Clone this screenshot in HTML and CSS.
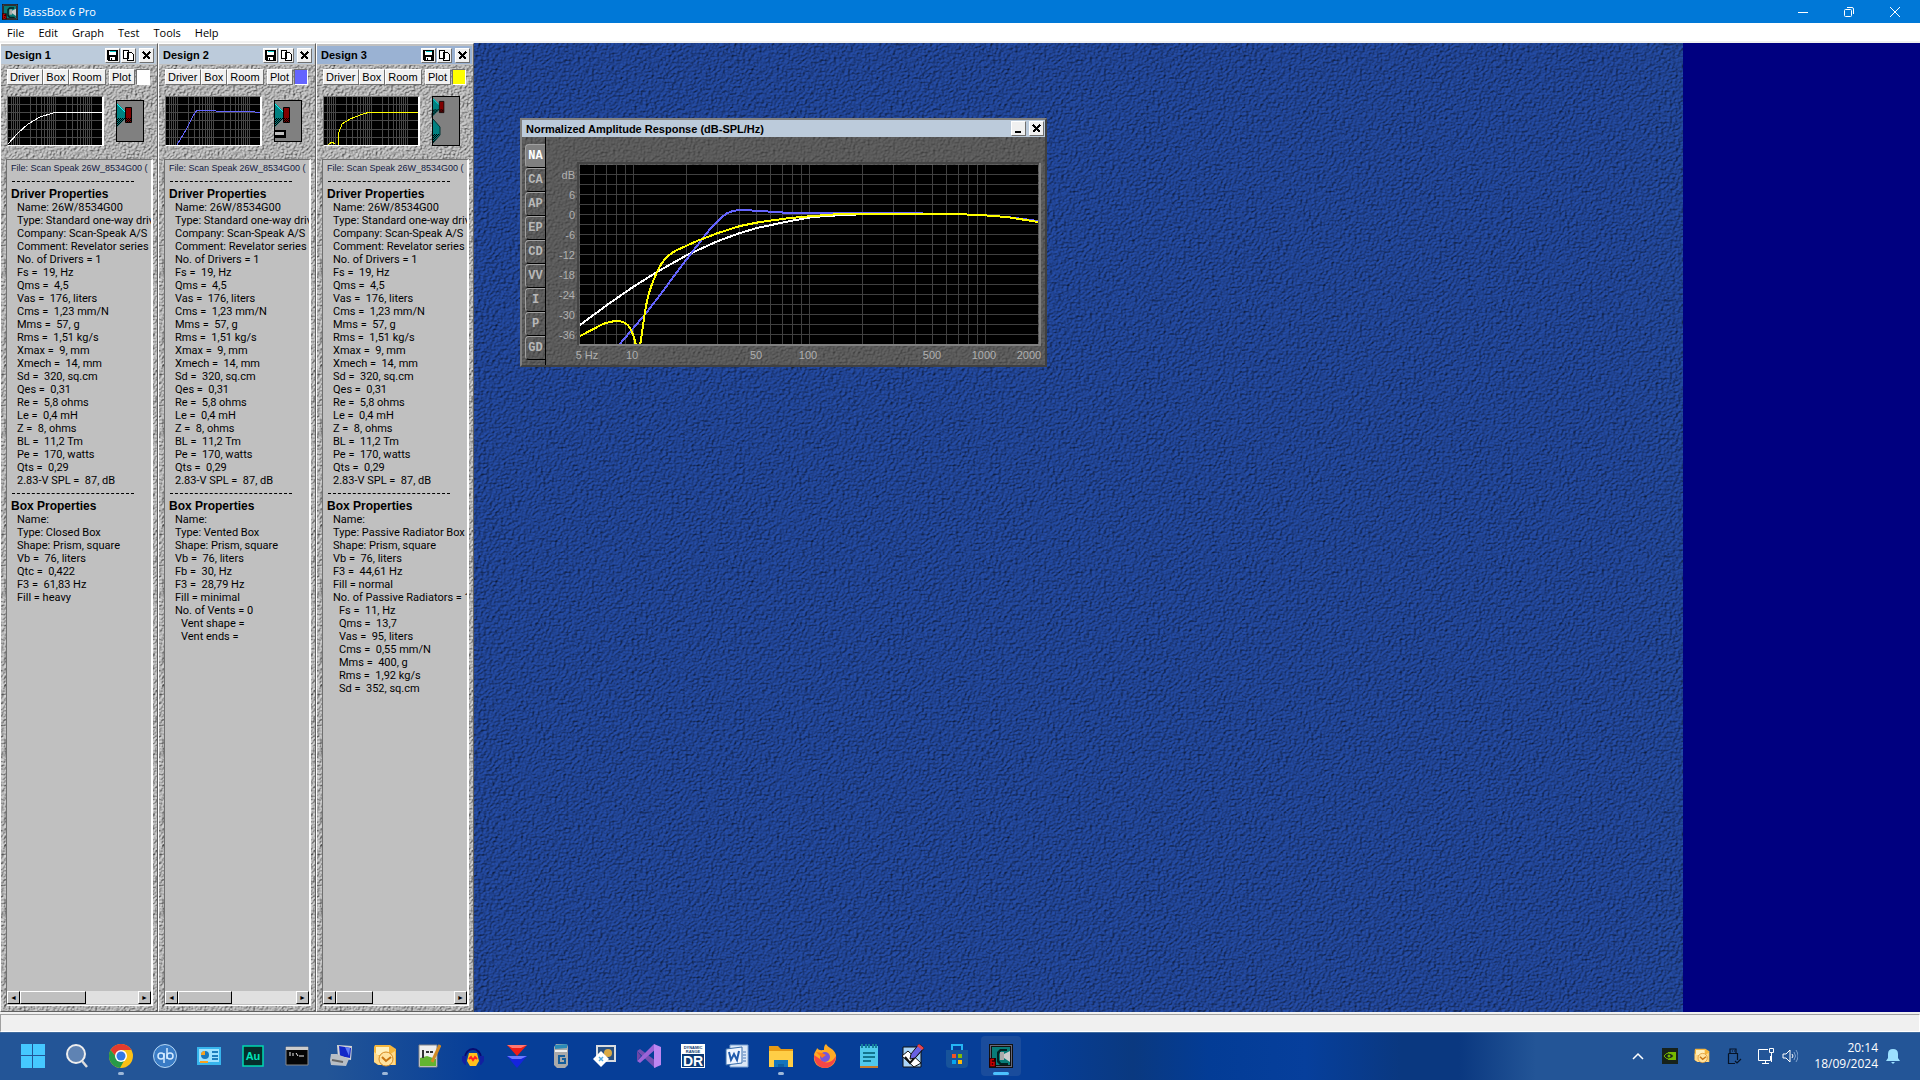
FILE: index.html
```html
<!DOCTYPE html>
<html lang="en">
<head>
    <meta charset="UTF-8">
    <meta name="viewport" content="width=device-width, initial-scale=1.0">
    <title>BassBox 6 Pro</title>
    <link rel="stylesheet" href="styles.css">
</head>
<body>
    <!-- shared icons -->
    <svg class="defs" width="0" height="0">
        <defs>
            <pattern id="dots" width="2" height="2" patternUnits="userSpaceOnUse">
                <path d="M0 0h1v1H0zM1 1h1v1H1z" fill="#000" shape-rendering="crispEdges"/>
            </pattern>
            <symbol id="i-save" viewBox="0 0 11 11">
                <path d="M0 0h11v11H1l-1-1z" fill="#000"/>
                <path d="M2 1h7v4H2z" fill="#fff"/><path d="M3 1h6v1H3z" fill="#0cc"/>
                <path d="M3 7h5v3H3z" fill="#fff"/><path d="M4 8h1v2H4z" fill="#000"/>
            </symbol>
            <symbol id="i-copy" viewBox="0 0 11 11">
                <path d="M.5 .5h5v8h-5zM4.500 2.500h4l2 2v6h-6z" fill="#fff" stroke="#000"/>
            </symbol>
            <symbol id="i-close" viewBox="0 0 11 11">
                <path d="M2 2l7 7M9 2l-7 7" stroke="#000" stroke-width="2"/>
            </symbol>
            <symbol id="i-grid" viewBox="0 0 94 48">
                <path d="M3.500 0v48M5.500 0v48M7.500 0v48M9.500 0v48M11.500 0v48M22.500 0v48M28.500 0v48M33.500 0v48M36.500 0v48M39.500 0v48M41.500 0v48M43.500 0v48M45.500 0v48M47.500 0v48M58.500 0v48M64.500 0v48M69.500 0v48M72.500 0v48M75.500 0v48M77.500 0v48M79.500 0v48M81.500 0v48M83.500 0v48M0 7.500h94M0 15.500h94M0 23.500h94M0 32.500h94M0 40.500h94" stroke="#484848"/>
            </symbol>
            <symbol id="i-woofer" viewBox="0 0 16 24">
                <path d="M0 0l8 8v8l-8 8z" fill="#008080"/>
                <path d="M0 15h9l-9 9z" fill="url(#dots)"/>
                <path d="M0 1l8 8" stroke="#0ff"/>
                <path d="M8.500 4.500h6v15h-6z" fill="#800000" stroke="#000"/>
                <path d="M9 15h5v4H9z" fill="url(#dots)"/>
            </symbol>
            <symbol id="i-app" viewBox="0 0 24 24">
                <path d="M0 0h24v24H0z" fill="#111"/><path d="M1 1h22v22H1z" fill="#667"/>
                <path d="M2 2h20v20H2z" fill="#111"/>
                <path d="M3 3h18v18H3z" fill="#087c78"/>
                <path d="M8 8l3-3h7v2h-6l-2 3v6l2 3h7v2h-8l-3-3z" fill="#022"/>
                <path d="M11 8h4v8h-4z" fill="#aaa"/><path d="M15 10l6-3v11l-6-4z" fill="#ccc"/>
                <path d="M0 14h7v9H0z" fill="#200"/>
                <path d="M5 15.500H2v6h3v-3H2" stroke="#c00" fill="none" stroke-width="1.500"/>
            </symbol>
            <symbol id="i-mail" viewBox="0 0 24 24">
                <path d="M2 1h15l6 4v16H5l-4-3V3z" fill="#f5b63e"/>
                <path d="M3 3h13v8H3z" fill="#fff0bd"/>
                <path d="M1 8l9 7 12-8v14H6l-5-3z" fill="#ffd98a"/>
                <circle cx="13" cy="15" r="7" fill="#ffe3a0" stroke="#d68a20"/>
                <path d="M9 13l4 4 5-4" stroke="#c87512" stroke-width="2" fill="none"/>
            </symbol>
        </defs>
    </svg>

    <header class="titlebar">
        <svg class="app-icon"><use href="#i-app"/></svg>
        <h1>BassBox 6 Pro</h1>
        <div class="window-controls">
            <button aria-label="Minimize"><svg width="12" height="12"><path d="M1 6.500h10" stroke="#fff"/></svg></button>
            <button aria-label="Restore"><svg width="12" height="12" fill="none" stroke="#fff"><rect x="1.500" y="3.500" width="7" height="7" rx="1"/><path d="M4 1.500h5q1.500 0 1.500 1.500v5"/></svg></button>
            <button aria-label="Close"><svg width="12" height="12"><path d="M1 1l10 10M11 1L1 11" stroke="#fff"/></svg></button>
        </div>
    </header>

    <nav class="menubar">
        <button>File</button>
        <button>Edit</button>
        <button>Graph</button>
        <button>Test</button>
        <button>Tools</button>
        <button>Help</button>
    </nav>

    <main class="workspace">
        <div class="designs" id="designs"></div>

        <div class="desktop">
            <section class="graph">
                <div class="graph-title">
                    <h2>Normalized Amplitude Response (dB-SPL/Hz)</h2>
                    <button class="tool" aria-label="Minimize"><svg viewBox="0 0 11 11"><path d="M2 8h6v2H2z"/></svg></button>
                    <button class="tool close" aria-label="Close"><svg><use href="#i-close"/></svg></button>
                </div>
                <div class="graph-body">
                    <div class="tabs">
                        <button class="on">NA</button>
                        <button>CA</button>
                        <button>AP</button>
                        <button>EP</button>
                        <button>CD</button>
                        <button>VV</button>
                        <button>I</button>
                        <button>P</button>
                        <button>GD</button>
                    </div>
                    <svg class="chart" viewBox="0 0 499 228">
                        <path d="M32 208V26h461" fill="none" stroke="#444" stroke-width="2"/>
                        <path d="M33 208h461V26" fill="none" stroke="#808080" stroke-width="2"/>
                        <!-- plot area, 176px per decade and 10px per 3dB -->
                        <svg x="34" y="28" width="458" height="179">
                            <path d="M0 0h458v179H0z"/>
                            <path class="lines" d="M14.500 0v179M26.500 0v179M36.500 0v179M45.500 0v179M53.500 0v179M106.500 0v179M137.500 0v179M159.500 0v179M176.500 0v179M190.500 0v179M202.500 0v179M212.500 0v179M221.500 0v179M229.500 0v179M282.500 0v179M313.500 0v179M335.500 0v179M352.500 0v179M366.500 0v179M378.500 0v179M388.500 0v179M397.500 0v179M405.500 0v179M0 9.500h458M0 19.500h458M0 29.500h458M0 39.500h458M0 49.500h458M0 59.500h458M0 69.500h458M0 79.500h458M0 89.500h458M0 99.500h458M0 109.500h458M0 119.500h458M0 129.500h458M0 139.500h458M0 149.500h458M0 159.500h458M0 169.500h458"/>
                            <g class="curves">
                                <path stroke="#fff" d="M0 160L27 140 53 122 77 107 107 90 138 76 160 68 177 63 210 56 233 52 263 50 290 49H373L400 50 427 52 458 57"/>
                                <path stroke="#6464ff" d="M39 180L67 147 80 130 103 99 120 77 130 64C143 51 146 45 163 45L180 46 210 48H313L373 49 400 50 427 52 458 56"/>
                                <path stroke="#ff0" d="M0 171L23 159C33 155 45 154 50 163Q54 170 56 181H60L65 147Q68 126 77 107C83 93 91 88 97 85L117 76 138 68 160 61 180 57 210 53 233 51 260 49H373L400 50 427 52 458 57"/>
                            </g>
                        </svg>
                        <g class="labels" text-anchor="end">
                            <text x="29" y="42">dB</text>
                            <text x="29" y="62">6</text>
                            <text x="29" y="82">0</text>
                            <text x="29" y="102">-6</text>
                            <text x="29" y="122">-12</text>
                            <text x="29" y="142">-18</text>
                            <text x="29" y="162">-24</text>
                            <text x="29" y="182">-30</text>
                            <text x="29" y="202">-36</text>
                        </g>
                        <g class="labels" text-anchor="middle">
                            <text x="41" y="222">5 Hz</text>
                            <text x="86" y="222">10</text>
                            <text x="210" y="222">50</text>
                            <text x="262" y="222">100</text>
                            <text x="386" y="222">500</text>
                            <text x="438" y="222">1000</text>
                            <text x="483" y="222">2000</text>
                        </g>
                    </svg>
                </div>
            </section>
        </div>
        <div class="margin"></div>
    </main>

    <div class="statusbar"></div>

    <footer class="taskbar">
        <div class="apps">
            <button aria-label="Start"><svg viewBox="0 0 24 24"><path d="M0 0h11v11H0zM12 0h12v11H12zM0 12h11v12H0zM12 12h12v12H12z" fill="#45c8ff"/></svg></button>
            <button aria-label="Search"><svg viewBox="0 0 24 24"><circle cx="11" cy="10" r="9" fill="#5f83b3" stroke="#eee" stroke-width="2"/><path d="M17 17l5 6" stroke="#ddd" stroke-width="2.500"/></svg></button>
            <button aria-label="Chrome" class="open"><svg viewBox="0 0 24 24"><circle cx="12" cy="12" r="12" fill="#fbc116"/><path d="M1.600 6a12 12 0 0 1 20.800 0H12L8 14z" fill="#e33b2e"/><path d="M1.600 6a12 12 0 0 0 9.400 18l5-9-8-1z" fill="#289a48"/><circle cx="12" cy="12" r="6" fill="#fff"/><circle cx="12" cy="12" r="4.500" fill="#3478e5"/></svg></button>
            <button aria-label="qBittorrent"><svg viewBox="0 0 24 24"><circle cx="12" cy="12" r="11.500" fill="#397bc5" stroke="#b6d7f4"/><g fill="none" stroke="#d4eaff" stroke-width="1.500"><circle cx="8" cy="12" r="3"/><path d="M11 9v10M14 4v11"/><circle cx="17" cy="12" r="3"/></g></svg></button>
            <button aria-label="Control Panel"><svg viewBox="0 0 24 24"><path d="M0 3h24v18H0z" fill="#37b5ed"/><path d="M2 5h20v13H2z" fill="#9de2ff"/><circle cx="8" cy="11" r="4" fill="#1878be"/><path d="M8 11V7a4 4 0 0 0-4 4z" fill="#f9a11d"/><path d="M15 8h6M15 12h6M15 15h6" stroke="#1c7ebd" stroke-width="2"/><path d="M3 17h8v2H3z" fill="#f9a11d"/></svg></button>
            <button aria-label="Audition"><svg viewBox="0 0 24 24"><path d="M2 2h20v20H2z" fill="#062e2b" stroke="#00d9b0" stroke-width="1.500"/><text x="12" y="16" class="au">Au</text></svg></button>
            <button aria-label="Command Prompt"><svg viewBox="0 0 24 24"><path d="M1 3h22v18H1z" fill="#050505" stroke="#888"/><path d="M1 3h22v3H1z" fill="#ccc"/><path d="M4 9h2M4 11h2M8 9v3M11 9l2 3M14 12h5" stroke="#eee"/></svg></button>
            <button aria-label="Remote session"><svg viewBox="0 0 24 24"><path d="M8 1l15 1-1 14-13-2z" fill="#d5d5d5"/><path d="M10 2l12 2-1 10-10-2z" fill="#1227c8"/><path d="M16 3l5 1-1 8z" fill="#5f7bf5"/><path d="M2 10l6 0 12 5-3 7-15-1-1-5z" fill="#b8bec5"/><path d="M3 16l11 2" stroke="#666" stroke-width="2"/></svg></button>
            <button aria-label="Outlook" class="open"><svg viewBox="0 0 24 24"><use href="#i-mail"/></svg></button>
            <button aria-label="Notepad++"><svg viewBox="0 0 24 24"><path d="M2 1h18v22H2z" fill="#eee" stroke="#888"/><path d="M3 14l7-2 9 3v7H3z" fill="#63b431"/><path d="M6 6v8M9 8h3M13 8h3" stroke="#333" stroke-width="2"/><path d="M23 1l-8 17" stroke="#d18a24" stroke-width="3"/></svg></button>
            <button aria-label="Audacity"><svg viewBox="0 0 24 24"><path d="M4 14a8 9 0 1 1 16 0" fill="none" stroke="#090b70" stroke-width="2"/><path d="M8 9h8l2 8-3 5H9l-3-5z" fill="#ffc21c"/><path d="M8 15l2-2 2 3 2-3 2 2" stroke="#f22" stroke-width="2" fill="none"/><path d="M1 12h4v9H4l-3-4zM19 12h4v5l-3 4h-1z" fill="#1220a0"/></svg></button>
            <button aria-label="Sync"><svg viewBox="0 0 24 24"><path d="M2 1h20L12 12z" fill="#ed1c16"/><path d="M2 12h20L12 24z" fill="#1524dd"/><path d="M2 1h20l-6 3H7z" fill="#ff7770"/><path d="M2 12h20l-6 3H7z" fill="#6b7aff"/></svg></button>
            <button aria-label="Battery"><svg viewBox="0 0 24 24"><path d="M5 3l2-3h11l1 3v18l-3 3H8l-3-3z" fill="#aaa"/><path d="M6 1l12-1v4l-12 1z" fill="#2a8ab8"/><path d="M6 7h12" stroke="#eee" stroke-width="2"/><path d="M16 12h-6v7h6v-4h-3" fill="none" stroke="#155e9c" stroke-width="2"/></svg></button>
            <button aria-label="Display tool"><svg viewBox="0 0 24 24"><path d="M3 1h20v17H3z" fill="#d9dce0"/><path d="M5 3h16v13H5z" fill="#285082"/><circle cx="15" cy="9" r="4" fill="#d9a945"/><path d="M8 7l8 8-8 8-8-8z" fill="#fff"/><path d="M6 13l4 4M10 13l-4 4" stroke="#51a8df" stroke-width="1.500"/></svg></button>
            <button aria-label="Visual Studio"><svg viewBox="0 0 24 24"><path d="M0 7l3-2 20 15-5 4z" fill="#7650b4"/><path d="M0 17l3 2L20 4l-3-4z" fill="#9b63d7"/><path d="M17 0l7 3v18l-7 3z" fill="#bd86f1"/><path d="M0 7v10l4-5z" fill="#7045a7"/></svg></button>
            <button aria-label="Dynamic Range"><svg viewBox="0 0 24 24"><path d="M0 0h24v24H0z" fill="#fff"/><path d="M1 10h22v13H1z" fill="#0b3974"/><text x="12" y="5" class="dr-small">DYNAMIC</text><text x="12" y="9" class="dr-small">RANGE</text><text x="12" y="22" class="dr">DR</text></svg></button>
            <button aria-label="Word"><svg viewBox="0 0 24 24"><path d="M5 1h18v22H5z" fill="#dce8f7" stroke="#7aa1d1"/><path d="M1 5l16-2v16l-16 2z" fill="#eff5ff" stroke="#376dab"/><path d="M4 8l2 8 3-6 3 6 2-9" fill="none" stroke="#215bac" stroke-width="2"/><path d="M18 8h3M18 11h3M18 14h3M18 17h3" stroke="#4c7dbb"/></svg></button>
            <button aria-label="File Explorer" class="open"><svg viewBox="0 0 24 24"><path d="M0 2h9l3 3h12v18H0z" fill="#e79b16"/><path d="M0 7h24v16H0z" fill="#ffce46"/><path d="M5 16h14v7H5z" fill="#1474bd"/><path d="M9 20h6v3H9z" fill="#1060a0"/></svg></button>
            <button aria-label="Firefox"><svg viewBox="0 0 24 24"><path d="M13 0c2 4 8 4 10 11 1 7-4 13-11 13S0 19 1 12c0-4 3-6 3-8 2 3 5 2 7 2 0-3 0-4 2-6z" fill="#ffab25"/><path d="M1 11c0 8 5 13 11 13s11-6 11-12c-5 8-11 8-16 3z" fill="#f64646"/><circle cx="12" cy="13" r="5" fill="#7656dc"/><path d="M3 8l6 1 4 2-4 3z" fill="#ff791c"/></svg></button>
            <button aria-label="Notepad"><svg viewBox="0 0 24 24"><path d="M3 2h18v20H3z" fill="#50c9ec"/><path d="M5 0v4M9 0v4M12 0v4M16 0v4M19 0v4" stroke="#16819b" stroke-width="2"/><path d="M6 9h12M6 13h12M6 17h8" stroke="#13758e" stroke-width="2"/><path d="M3 22h18v2H3z" fill="#c77b28"/></svg></button>
            <button aria-label="Sketch tool"><svg viewBox="0 0 24 24"><path d="M2 3h18v20H2z" fill="#a9d4f9" stroke="#111"/><path d="M1 12l6-5 13 12-7 4z" fill="#fff" stroke="#111"/><path d="M4 13l5 6L22 4" fill="none" stroke="#111" stroke-width="2"/><path d="M18 0l5 4-9 10-5 1 1-5z" fill="#6861e2" stroke="#111"/><path d="M18 0l5 4-2 2-5-4z" fill="#e5434c"/></svg></button>
            <button aria-label="Store"><svg viewBox="0 0 24 24"><path d="M7 7V1h10v6" fill="none" stroke="#25b5f4" stroke-width="2"/><path d="M1 6h22v14q0 4-4 4H5q-4 0-4-4z" fill="#17539a"/><path d="M7 10h4v4H7z" fill="#f35325"/><path d="M13 10h4v4h-4z" fill="#81bc06"/><path d="M7 16h4v4H7z" fill="#05a6f0"/><path d="M13 16h4v4h-4z" fill="#ffba08"/></svg></button>
            <button aria-label="BassBox 6 Pro" class="active"><svg viewBox="0 0 24 24"><use href="#i-app"/></svg></button>
        </div>
        <div class="tray">
            <button aria-label="Show hidden icons"><svg viewBox="0 0 16 16"><path d="M3 11l5-5 5 5" fill="none" stroke="#fff" stroke-width="1.500"/></svg></button>
            <button aria-label="Nvidia"><svg viewBox="0 0 16 16"><path d="M0 0h16v16H0z" fill="#17221a"/><path d="M6 4h8v8H6z" fill="#76b900"/><path d="M2 8q4-6 10 0-6 6-10 0z" fill="#17221a" stroke="#76b900"/><circle cx="7" cy="8" r="1.500" fill="#76b900"/></svg></button>
            <button aria-label="Outlook"><svg viewBox="0 0 24 24"><use href="#i-mail"/></svg></button>
            <button aria-label="Eject USB"><svg viewBox="0 0 16 16"><path d="M4 5V1h6v4M2.500 5.500h9V12M2.500 5.500v10H9M9 13l2 2 4-4M6 3h1M8 3h1" fill="none" stroke="#061326" stroke-width="1.200"/></svg></button>
            <div class="system">
                <svg viewBox="0 0 16 16"><path d="M10 1.500H.5v11h12V8M4 15.500h7M7.500 13v2M11.500 .5h4v4h-4zM13.500 5v9" fill="none" stroke="#fff"/></svg>
                <svg viewBox="0 0 16 16"><path d="M1 6h3l4-4v12l-4-4H1zM10 6q2 2 0 4" fill="none" stroke="#fff"/><path d="M12 4q3 4 0 8M14 2q4 6 0 12" fill="none" stroke="#7fa2cf"/></svg>
            </div>
            <div class="clock"><span>20:14</span><span>18/09/2024</span></div>
            <button aria-label="Notifications"><svg viewBox="0 0 16 16"><path d="M8 1q5 0 5 5v4l2 3H1l2-3V6q0-5 5-5zM6 14h4l-2 2z" fill="#9ce0ff"/></svg></button>
        </div>
    </footer>

    <script src="script.js"></script>
</body>
</html>
```
FILE: script.js
```javascript
const driver = [
    'Name: 26W/8534G00', 'Type: Standard one-way driv', 'Company: Scan-Speak A/S',
    'Comment: Revelator series', 'No. of Drivers = 1', 'Fs =  19, Hz', 'Qms =  4,5',
    'Vas =  176, liters', 'Cms =  1,23 mm/N', 'Mms =  57, g', 'Rms =  1,51 kg/s',
    'Xmax =  9, mm', 'Xmech =  14, mm', 'Sd =  320, sq.cm', 'Qes =  0,31',
    'Re =  5,8 ohms', 'Le =  0,4 mH', 'Z =  8, ohms', 'BL =  11,2 Tm',
    'Pe =  170, watts', 'Qts =  0,29', '2.83-V SPL =  87, dB'
];

const woofer = '<use href="#i-woofer" x="1" y="3" width="16" height="24"/>';

const designs = [
    {
        name: 'Design 1',
        color: '#fff',
        curve: 'M0 47L9 37 20 27 32 20 45 16 52 15H87L94 16',
        height: 42,
        icon: woofer,
        scroll: 56,
        box: ['Name:', 'Type: Closed Box', 'Shape: Prism, square', 'Vb =  76, liters',
            'Qtc =  0,422', 'F3 =  61,83 Hz', 'Fill = heavy'],
        extra: []
    },
    {
        name: 'Design 2',
        color: '#6464ff',
        curve: 'M11 48L21 31 27 19 31 13H49L51 14.500H87L94 16',
        height: 42,
        icon: woofer + '<path d="M1 30h11v8H1z" fill="#000"/><path d="M1 32h9v3H1z" fill="#c0c0c0"/>',
        scroll: 46,
        box: ['Name:', 'Type: Vented Box', 'Shape: Prism, square', 'Vb =  76, liters',
            'Fb =  30, Hz', 'F3 =  28,79 Hz', 'Fill = minimal', 'No. of Vents = 0'],
        extra: ['Vent shape =', 'Vent ends =']
    },
    {
        name: 'Design 3',
        color: '#ff0',
        current: true,
        curve: 'M4 48L8 45 11 47M14 48L15 35 18 27 26 22 39 17 46 15H87L94 16',
        height: 50,
        icon: `<use href="#i-woofer" x="1" y="2" width="12" height="18"/>
            <path d="M1 23l7 8v8l-7 8z" fill="#008080"/><path d="M1 38h7l-7 9z" fill="url(#dots)"/>
            <path d="M1 23l7 8v8l-7 8" fill="none" stroke="#033"/>`,
        scroll: 31,
        box: ['Name:', 'Type: Passive Radiator Box', 'Shape: Prism, square', 'Vb =  76, liters',
            'F3 =  44,61 Hz', 'Fill = normal', 'No. of Passive Radiators = 1'],
        extra: ['Fs =  11, Hz', 'Qms =  13,7', 'Vas =  95, liters', 'Cms =  0,55 mm/N',
            'Mms =  400, g', 'Rms =  1,92 kg/s', 'Sd =  352, sq.cm']
    }
];

function items(list, cls = '') {
    return list.map(text => `<li class="${cls}">${text}</li>`).join('');
}

function renderDesign(d) {
    const section = document.createElement('section');
    section.className = d.current ? 'design current' : 'design';
    section.innerHTML = `
        <div class="design-title">
            <h2>${d.name}</h2>
            <button class="tool" aria-label="Save"><svg><use href="#i-save"/></svg></button>
            <button class="tool" aria-label="Copy"><svg><use href="#i-copy"/></svg></button>
            <button class="tool close" aria-label="Close"><svg><use href="#i-close"/></svg></button>
        </div>
        <div class="design-tools">
            <button>Driver</button>
            <button>Box</button>
            <button>Room</button>
            <button class="plot">Plot</button>
            <button class="swatch" aria-label="Plot color" style="background: ${d.color}"></button>
        </div>
        <div class="preview">
            <svg class="thumb" viewBox="0 0 94 48">
                <use href="#i-grid"/>
                <path d="${d.curve}" fill="none" stroke="${d.color}"/>
            </svg>
            <svg width="28" height="${d.height}">
                <rect x=".5" y=".5" width="27" height="${d.height - 1}" fill="#808080" stroke="#000"/>
                ${d.icon}
            </svg>
        </div>
        <div class="listing">
            <p class="file">File: Scan Speak 26W_8534G00 (</p>
            <hr>
            <h3>Driver Properties</h3>
            <ul>${items(driver)}</ul>
            <hr>
            <h3>Box Properties</h3>
            <ul>${items(d.box)}${items(d.extra, 'sub')}</ul>
            <div class="scroll">
                <button aria-label="Scroll left">&#9668;</button>
                <div class="track"><div class="handle" style="width: ${d.scroll}%"></div></div>
                <button aria-label="Scroll right">&#9658;</button>
            </div>
        </div>`;
    document.getElementById('designs').appendChild(section);
}

designs.forEach(renderDesign);
```
FILE: styles.css
```css
* {
    margin: 0;
    padding: 0;
    box-sizing: border-box;
}

body {
    display: flex;
    flex-direction: column;
    height: 100vh;
    overflow: hidden;
    font-family: "Liberation Sans", Arial, sans-serif;
    font-size: 11px;
    color: #000;
    background: #f0f0f0;
}

button {
    font: inherit;
    color: inherit;
    border: none;
    background: none;
}

svg {
    display: block;
    flex: none;
}

.defs {
    position: absolute;
}

/* main window */
.titlebar {
    display: flex;
    align-items: center;
    height: 23px;
    padding: 0 2px;
    background: #0078d7;
    color: #fff;
    font-family: "Open Sans", sans-serif;
}

.titlebar h1 {
    flex: 1;
    margin-left: 5px;
    font-size: 11px;
    font-weight: normal;
}

.app-icon {
    width: 16px;
    height: 16px;
}

.window-controls {
    display: flex;
}

.window-controls button {
    display: flex;
    justify-content: center;
    align-items: center;
    width: 46px;
    height: 20px;
}

.menubar {
    display: flex;
    align-items: center;
    gap: 14px;
    height: 20px;
    padding-left: 7px;
    background: #fff;
    border-bottom: 2px solid #f0f0f0;
    font-family: "Open Sans", sans-serif;
}

.workspace {
    flex: 1;
    display: flex;
    min-height: 0;
}

/* design panels */
.designs {
    display: flex;
}

.design {
    display: flex;
    flex-direction: column;
    width: 158px;
    padding-bottom: 5px;
    border: 1px solid #fff;
    border-right-color: #606060;
    border-bottom-color: #606060;
    background: #b0b0b0 url("data:image/svg+xml,%3Csvg xmlns='http://www.w3.org/2000/svg' width='160' height='160'%3E%3Cfilter id='n' x='0' y='0' width='100%25' height='100%25' color-interpolation-filters='sRGB'%3E%3CfeTurbulence type='fractalNoise' baseFrequency='.45 .55' numOctaves='2' stitchTiles='stitch'/%3E%3CfeDiffuseLighting surfaceScale='1.8' lighting-color='%23d4d4d4'%3E%3CfeDistantLight azimuth='225' elevation='58'/%3E%3C/feDiffuseLighting%3E%3C/filter%3E%3Crect width='160' height='160' filter='url(%23n)'/%3E%3C/svg%3E");
}

.design-title,
.graph-title {
    display: flex;
    align-items: center;
    background: #bccbdb;
}

.design-title {
    height: 21px;
    padding: 0 2px 0 4px;
    border: 1px solid #c0c0c0;
    border-top-width: 2px;
    border-left: none;
}

.graph-title {
    height: 17px;
    padding: 0 1px 0 4px;
}

.current .design-title {
    background: #9ab2d3;
}

.design-title h2,
.graph-title h2 {
    flex: 1;
    font-size: 11px;
    line-height: 16px;
    white-space: nowrap;
}

.tool {
    width: 15px;
    height: 15px;
    margin-left: 1px;
    padding: 1px;
    background: #f0f0f0;
    border: 1px solid #fff;
    border-right-color: #707070;
    border-bottom-color: #707070;
}

.tool svg {
    width: 11px;
    height: 11px;
    shape-rendering: crispEdges;
}

.tool.close {
    margin-left: 3px;
}

.design-tools {
    display: flex;
    margin-top: 4px;
    padding: 0 7px 0 6px;
}

.design-tools button {
    height: 16px;
    padding: 0 3px 0 2px;
    background: #f0f0f0;
    border: 1px solid #fff;
    border-right-color: #707070;
    border-bottom-color: #707070;
    line-height: 13px;
}

.design-tools .plot {
    margin-left: auto;
    margin-right: 1px;
}

.design-tools .swatch {
    width: 14px;
    border-color: #707070 #fff #fff #707070;
}

.preview {
    display: flex;
    justify-content: space-between;
    align-items: center;
    height: 50px;
    margin: 11px 13px 13px 6px;
}

.thumb {
    width: 97px;
    height: 50px;
    background: #000;
    border: 1px solid #707070;
    border-right: 2px solid #fff;
    border-bottom-color: #fff;
    shape-rendering: crispEdges;
}

.listing {
    flex: 1;
    display: flex;
    flex-direction: column;
    margin: 0 4px 0 5px;
    padding: 2px 0 1px;
    overflow: hidden;
    background: #c0c0c0;
    border: 1px solid #707070;
    border-right: 2px solid #fff;
    border-bottom-color: #fff;
    line-height: 13px;
}

.listing .file {
    padding-left: 4px;
    font-size: 9px;
    color: #101840;
    white-space: nowrap;
}

.listing hr {
    width: 122px;
    margin: 6px 0 6px 5px;
    border: none;
    border-top: 1px dashed #000;
}

.listing h3 {
    padding-left: 4px;
    font-size: 12px;
}

.listing ul {
    padding-left: 10px;
    list-style: none;
}

.listing li {
    font-family: Roboto, "Liberation Sans", sans-serif;
    white-space: pre;
}

.listing .sub {
    padding-left: 6px;
}

.scroll {
    display: flex;
    height: 13px;
    margin-top: auto;
}

.scroll button,
.handle {
    background: #c0c0c0;
    border: 1px solid #fff;
    border-right-color: #000;
    border-bottom-color: #000;
}

.scroll button {
    width: 13px;
    font-size: 7px;
    line-height: 10px;
}

.track {
    flex: 1;
    background: #e0e0e0;
}

.handle {
    height: 13px;
}

/* graph window */
.desktop {
    flex: 1;
    position: relative;
    background: #1e4190 url("data:image/svg+xml,%3Csvg xmlns='http://www.w3.org/2000/svg' width='256' height='256'%3E%3Cfilter id='n' x='0' y='0' width='100%25' height='100%25' color-interpolation-filters='sRGB'%3E%3CfeTurbulence type='fractalNoise' baseFrequency='.35 .45' numOctaves='2' stitchTiles='stitch'/%3E%3CfeDiffuseLighting surfaceScale='1.6' lighting-color='%23264fac'%3E%3CfeDistantLight azimuth='225' elevation='58'/%3E%3C/feDiffuseLighting%3E%3C/filter%3E%3Crect width='256' height='256' filter='url(%23n)'/%3E%3C/svg%3E");
}

.margin {
    width: 237px;
    background: #000080;
}

.graph {
    position: absolute;
    left: 46px;
    top: 75px;
    border: 2px solid #808080;
    border-right-color: #404040;
    border-bottom-color: #404040;
}

.graph-body {
    display: flex;
    background: #585858 url("data:image/svg+xml,%3Csvg xmlns='http://www.w3.org/2000/svg' width='160' height='160'%3E%3Cfilter id='n' x='0' y='0' width='100%25' height='100%25' color-interpolation-filters='sRGB'%3E%3CfeTurbulence type='fractalNoise' baseFrequency='.4 .5' numOctaves='2' stitchTiles='stitch'/%3E%3CfeDiffuseLighting surfaceScale='1' lighting-color='%23686868'%3E%3CfeDistantLight azimuth='225' elevation='60'/%3E%3C/feDiffuseLighting%3E%3C/filter%3E%3Crect width='160' height='160' filter='url(%23n)'/%3E%3C/svg%3E");
}

.tabs {
    width: 24px;
    padding: 7px 0 0 3px;
    border-right: 1px solid #000;
}

.tabs button {
    display: block;
    width: 20px;
    height: 24px;
    border: 1px solid #a0a0a0;
    border-right: none;
    border-bottom-color: #000;
    border-radius: 4px 0 0 4px;
    font: bold 12px "Liberation Mono", monospace;
    color: #b8b8b8;
}

.tabs .on {
    background: #808080;
    color: #fff;
}

.chart {
    width: 499px;
    height: 228px;
}

.lines {
    stroke: #404040;
    shape-rendering: crispEdges;
}

.curves {
    fill: none;
    stroke-width: 2;
    shape-rendering: crispEdges;
}

.labels {
    fill: #b0b0b0;
    font-size: 11px;
}

.statusbar {
    height: 18px;
    margin-top: 2px;
    border: 1px solid #a0a0a0;
    border-right-color: #fff;
    border-bottom-color: #fff;
}

/* taskbar */
.taskbar {
    display: flex;
    justify-content: space-between;
    align-items: center;
    height: 48px;
    padding: 0 19px 0 13px;
    background: linear-gradient(90deg, #235597 0, #235597 17%, #063e98 25%, #063e98 54%, #0a3980 59%, #033c96 63%, #063f9c 68%, #0a3880 73%, #0a3880 76%, #235597 80%, #235597 100%);
    box-shadow: inset 0 1px #406ca0;
}

.apps {
    display: flex;
    gap: 4px;
}

.apps button {
    position: relative;
    width: 40px;
    height: 40px;
    padding: 8px;
    border-radius: 4px;
}

.apps svg {
    width: 24px;
    height: 24px;
}

.apps .active {
    background: #1a4c9c;
}

.apps .open::after,
.apps .active::after {
    content: '';
    position: absolute;
    left: 17px;
    bottom: 1px;
    width: 6px;
    height: 3px;
    border-radius: 2px;
    background: #9eb8d8;
}

.apps .active::after {
    left: 12px;
    width: 16px;
    background: #4cc2ff;
}

.au {
    fill: #00e4bb;
    font: bold 11px "Liberation Sans", sans-serif;
    text-anchor: middle;
}

.dr {
    fill: #fff;
    font: bold 14px "Liberation Sans", sans-serif;
    text-anchor: middle;
}

.dr-small {
    fill: #0b3974;
    font: bold 4px "Liberation Sans", sans-serif;
    text-anchor: middle;
}

.tray {
    display: flex;
    align-items: center;
    gap: 16px;
    color: #fff;
}

.tray svg {
    width: 16px;
    height: 16px;
}

.system {
    display: flex;
    gap: 8px;
}

.clock {
    display: flex;
    flex-direction: column;
    align-items: flex-end;
    font: 12px/16px "Open Sans", sans-serif;
}

.tray .clock + button {
    margin-left: -9px;
}
```
